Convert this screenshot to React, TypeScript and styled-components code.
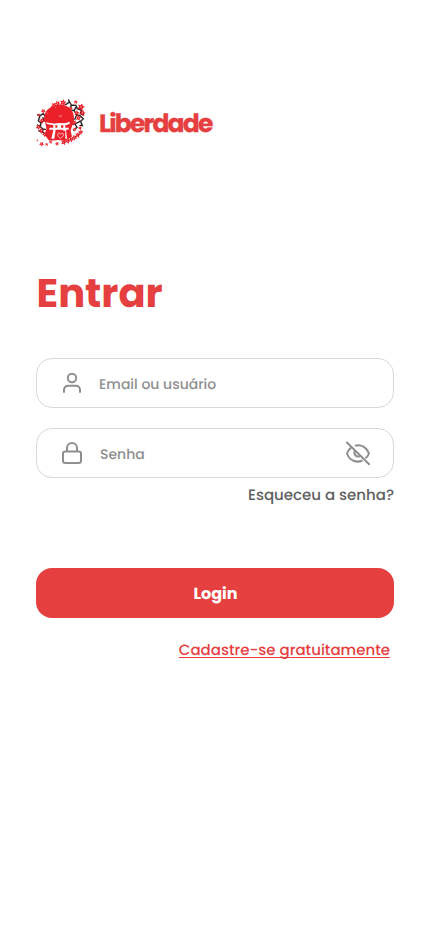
import React from "react";
import styled, { createGlobalStyle } from "styled-components";

const GlobalStyle = createGlobalStyle`
  * { box-sizing: border-box; }
  body { margin: 0; background: #fff; font-family: Poppins, Inter, "Open Sans", sans-serif; text-rendering: geometricPrecision; }
  input, button { text-rendering: geometricPrecision; }
`;

const Screen = styled.main`
  display: flex;
  flex-direction: column;
  width: 430px;
  height: 932px;
  padding: 98px 36px 0;
  background: #fff;
`;

const Brand = styled.header`
  display: flex;
  align-items: center;
  height: 50px;
  gap: 13px;
`;

const BrandName = styled.span`
  margin-top: 1px;
  font-size: 25px;
  font-weight: 700;
  line-height: 50px;
  letter-spacing: -1.8px;
  color: #e53f3f;
  -webkit-text-stroke: 0.3px #e53f3f;
`;

const Title = styled.h1`
  margin: 115px 0 0 0.5px;
  height: 60px;
  font-size: 40px;
  font-weight: 700;
  line-height: 60px;
  color: #e53f3f;
`;

const Form = styled.form`
  display: flex;
  flex-direction: column;
  margin-top: 35px;
`;

const Field = styled.label`
  display: flex;
  align-items: center;
  height: 50px;
  padding: 0 22px 0 22px;
  margin-bottom: 20px;
  border: 1px solid #d9d9d9;
  border-radius: 16px;
  color: #8e8e8e;
  svg { flex: none; }
`;

const Input = styled.input<{ $gap: number }>`
  flex: 1;
  min-width: 0;
  margin: 1px 0 0 ${(p) => p.$gap}px;
  padding: 0;
  border: 0;
  outline: 0;
  background: transparent;
  font: 500 14px/24px Poppins, Inter, sans-serif;
  &::placeholder { color: #8e8e8e; opacity: 1; }
`;

const Forgot = styled.a`
  align-self: flex-end;
  margin-top: -13px;
  height: 22px;
  font-size: 15px;
  font-weight: 500;
  line-height: 22px;
  white-space: nowrap;
  color: #5f5f5f;
`;

const Submit = styled.button`
  height: 50px;
  margin-top: 61px;
  padding: 1px 0 0 1px;
  border: 0;
  border-radius: 16px;
  background: #e53f3f;
  color: #fff;
  font: 700 16px/49px Poppins, Inter, sans-serif;
`;

const Register = styled.a`
  align-self: flex-end;
  margin: 22px 4px 0 0;
  font-size: 15px;
  font-weight: 500;
  line-height: 22px;
  white-space: nowrap;
  color: #e53f3f;
  text-decoration: underline;
  text-decoration-thickness: 1px;
  text-underline-offset: 1.5px;
  text-decoration-skip-ink: none;
`;

const blossoms: [number, number, number][] = [
  [72, 40, 9], [83, 34, 8], [99, 32, 10], [76, 46, 7], [137, 30, 6], [153, 45, 11], [157, 63, 9],
  [140, 63, 8], [145, 78, 8], [122, 49, 6], [132, 91, 8], [134, 112, 6], [150, 108, 6],
  [40, 57, 7], [53, 63, 7], [26, 69, 5], [36, 86, 8], [25, 105, 8], [34, 116, 8],
  [44, 127, 7], [50, 157, 5], [62, 150, 5], [81, 155, 6], [35, 156, 7], [22, 145, 3], [155, 119, 4],
  [101, 151, 8], [113, 147, 8], [124, 142, 8], [134, 136, 8], [143, 129, 8], [151, 121, 7],
];

const Logo = () => (
  <svg width="50" height="50" viewBox="18 18 150 150" fill="none">
    <g stroke="#2c2528" strokeWidth="4.2" strokeLinecap="round">
      <path d="M107 38l12-8 5 9 14 1 4 10 13 5-4 10 10 4M118 30l-2-6M124 39l-4 15 12 2 8 12 11 4M132 56l5-9 9 3M140 68l-5 13-7 2M151 72l9 8-8 8 5 13-7-1M150 88l-15 8 6 10-10 8M122 96l12 0" />
      <path d="M23 68l7 3 10-6 6 8M30 71l-5 15 8 7-2 11 8 7 7 1M33 93l9-7-3-9M31 104l-8-5M39 111l-2 9 7 5M37 120l-10-3" />
    </g>
    <path fill="#eb2028" d="M42 80C43 53 65 38 90 38c25 0 41 15 42 39-1 17-7 27-10 39l4 18-21 13-20-3-27 2-15-18 6-16C50 99 43 91 42 80Z" />
    {blossoms.map(([x, y, r]) => (
      <g key={`${x}-${y}`} transform={`translate(${x} ${y}) rotate(${x % 45})`}>
        <path fill="#eb2028" d={`M0 ${-r}L${r * 0.4} ${-r * 0.4}L${r} ${-r * 0.45}L${r * 0.55} ${r * 0.2}L${r * 0.7} ${r}L0 ${r * 0.55}L${-r * 0.8} ${r * 0.85}L${-r * 0.5} ${r * 0.1}L${-r} ${-r * 0.4}L${-r * 0.3} ${-r * 0.4}Z`} />
        <circle r={r * 0.16} fill="#fff" />
      </g>
    ))}
    <path fill="#fff" d="M47 91q20 5 42 2 16 2 30-4v7q-10 4-21 4h-5v7h23v6h-8l3 27h-8l-4-27H77l-4 27h-9l6-27H58v-6h24v-7q-22 0-35-6Z" />
    <path fill="#fff" d="M70 99h6v9h-6ZM100 98h6v10h-6Z" />
    <path fill="#eb2028" d="M78 116h28v26H77Z" />
    <path d="M91 139c-10-6-10-14-5-16 4 0 5 4 5 4s4-5 8-3c4 3 0 11-8 15Z" stroke="#fff" strokeWidth="2" />
    <path d="M86 71l5 3 5-4" stroke="#fff" strokeWidth="1.6" />
    <path d="M98 152l36-13 20-20" stroke="#63362f" strokeWidth="1.5" strokeDasharray="3 4" />
  </svg>
);

const UserIcon = () => (
  <svg width="26" height="24" viewBox="-1 0 26 24" fill="none" stroke="currentColor" strokeWidth="2" strokeLinecap="round">
    <circle cx="12" cy="7" r="4.2" />
    <path d="M4 21v-2.2a4 4 0 0 1 4-4h8a4 4 0 0 1 4 4V21" />
  </svg>
);

const LockIcon = () => (
  <svg width="26" height="24" viewBox="-1 0 26 24" fill="none" stroke="currentColor" strokeWidth="2">
    <rect x="3" y="10.5" width="18" height="11.5" rx="2.2" />
    <path d="M7 10.5V7a5 5 0 0 1 10 0v3.5" />
  </svg>
);

const EyeOffIcon = () => (
  <svg width="26" height="26" viewBox="-1 -1.5 26 26" fill="none" stroke="currentColor" strokeWidth="2">
    <path d="M.4 .5l23.2 22.8" />
    <path d="M9 4.2C16 2.4 21 6.4 23 12c-.8 2-2 3.5-3.6 4.7M5.2 6.2C3.1 7.6 1.7 9.7 1 12c2.7 7.4 9.5 9.7 15.5 7" />
    <path d="M9 9.3c-1.8 3.4 1 6.6 4.8 5.6" />
  </svg>
);

export default function App() {
  return (
    <>
      <GlobalStyle />
      <Screen>
        <Brand><Logo /><BrandName>Liberdade</BrandName></Brand>
        <Title>Entrar</Title>
        <Form onSubmit={(e) => e.preventDefault()}>
          <Field><UserIcon /><Input $gap={14} placeholder="Email ou usuário" /></Field>
          <Field><LockIcon /><Input $gap={15} type="password" placeholder="Senha" /><EyeOffIcon /></Field>
          <Forgot>Esqueceu a senha?</Forgot>
          <Submit>Login</Submit>
          <Register>Cadastre-se gratuitamente</Register>
        </Form>
      </Screen>
    </>
  );
}
